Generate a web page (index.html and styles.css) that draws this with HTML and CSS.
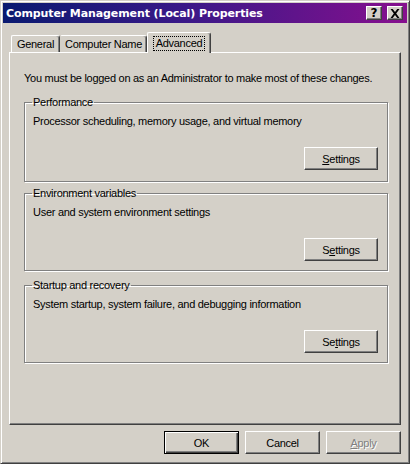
FILE: index.html
```html
<!DOCTYPE html>
<html>
<head>
<meta charset="utf-8">
<link rel="stylesheet" href="styles.css">
</head>
<body>
<div class="window">
  <div class="titlebar">
    <span class="title">Computer Management (Local) Properties</span>
    <div class="caption-btns">
      <span class="cap-btn help">?</span>
      <span class="cap-btn close"><svg width="10" height="9" viewBox="0 0 10 9"><path d="M0.5 0h2.2l2.3 2.9 2.3-2.9h2.2L6.2 4.5 9.5 9H7.3L5 6.1 2.7 9H0.5l3.3-4.5z" fill="#000"/></svg></span>
    </div>
  </div>
  <div class="body">
    <div class="tabs">
      <div class="tab t-general">General</div>
      <div class="tab t-name">Computer Name</div>
      <div class="tab t-adv active"><span class="focus">Advanced</span></div>
    </div>
    <div class="panel">
      <p class="note">You must be logged on as an Administrator to make most of these changes.</p>
      <fieldset class="group g1">
        <legend>Performance</legend>
        <p class="desc">Processor scheduling, memory usage, and virtual memory</p>
        <div class="row"><button class="btn"><u>S</u>ettings</button></div>
      </fieldset>
      <fieldset class="group g2">
        <legend>Environment variables</legend>
        <p class="desc">User and system environment settings</p>
        <div class="row"><button class="btn">S<u>e</u>ttings</button></div>
      </fieldset>
      <fieldset class="group g3">
        <legend>Startup and recovery</legend>
        <p class="desc">System startup, system failure, and debugging information</p>
        <div class="row"><button class="btn">Se<u>t</u>tings</button></div>
      </fieldset>
    </div>
    <div class="actions">
      <button class="btn default">OK</button>
      <button class="btn">Cancel</button>
      <button class="btn disabled"><u>A</u>pply</button>
    </div>
  </div>
</div>
</body>
</html>
```
FILE: styles.css
```css
* { box-sizing: border-box; }
html, body { margin: 0; padding: 0; background: #d4d0c8; }
body {
  font-family: "Liberation Sans", Arial, sans-serif;
  font-size: 11px;
  letter-spacing: -0.28px;
  color: #000;
}
.window {
  width: 410px;
  height: 464px;
  border: 1px solid;
  border-color: #d4d0c8 #404040 #404040 #d4d0c8;
  box-shadow: inset 1px 1px #fff, inset -1px -1px #808080;
  padding: 2px;
  display: flex;
  flex-direction: column;
  background: #d4d0c8;
}
.titlebar {
  height: 20px;
  display: flex;
  align-items: center;
  justify-content: space-between;
  padding: 0 4px 0 3px;
  background: linear-gradient(to right, #0a1a70, #3a1888 45%, #86108e);
}
.title {
  color: #fff;
  font-family: "DejaVu Sans", sans-serif;
  font-weight: bold;
  font-size: 11px;
  letter-spacing: -0.1px;
}
.caption-btns { display: flex; gap: 5px; }
.cap-btn {
  width: 16px;
  height: 14px;
  background: #d4d0c8;
  border: 1px solid;
  border-color: #fff #404040 #404040 #fff;
  box-shadow: inset -1px -1px #808080;
  display: flex;
  align-items: center;
  justify-content: center;
  font-family: "DejaVu Sans", sans-serif;
  font-weight: bold;
  font-size: 12px;
  line-height: 1;
  letter-spacing: 0;
}
.body {
  flex: 1;
  display: flex;
  flex-direction: column;
  padding: 9px 6px 0 6px;
}
.tabs {
  display: flex;
  align-items: flex-end;
  height: 20px;
  padding-left: 2px;
  position: relative;
  z-index: 1;
}
.tab {
  height: 17px;
  border: 1px solid;
  border-bottom: none;
  border-color: #fff #404040 #404040 #fff;
  border-radius: 2px 3px 0 0;
  box-shadow: inset -1px 0 #808080;
  text-align: center;
  line-height: 14px;
  padding-top: 1px;
}
.t-general { width: 49px; }
.t-name { width: 87px; border-left-color: #d4d0c8; }
.t-adv { width: 64px; }
.tab.active {
  height: 21px;
  margin-bottom: -1px;
  background: #d4d0c8;
  padding-top: 3px;
}
.focus {
  display: inline-block;
  outline: 1px dotted #000;
  outline-offset: 0;
  padding: 0 2px;
  line-height: 13px;
}
.panel {
  height: 373px;
  border: 1px solid;
  border-color: #fff #404040 #404040 #fff;
  box-shadow: inset -1px -1px #808080;
  padding: 19px 12px 0 14px;
  display: flex;
  flex-direction: column;
}
.note { margin: 0; line-height: 13px; white-space: nowrap; }
.group {
  margin: 11px 0 0 0;
  padding: 6px 9px 0 8px;
  border: 1px solid #808080;
  box-shadow: inset 1px 1px #fff, 1px 1px #fff;
  min-width: 0;
  height: 86px;
}
.group.g2, .group.g3 { margin-top: 5px; height: 84px; }
.group.g3 { margin-top: 8px; }
.group legend {
  padding: 0 1px;
  margin-left: -1px;
  line-height: 13px;
}
.desc { margin: 0; line-height: 13px; }
.row {
  display: flex;
  justify-content: flex-end;
  margin-top: 19px;
}
.btn {
  font-family: inherit;
  font-size: 11px;
  letter-spacing: inherit;
  color: #000;
  width: 75px;
  height: 23px;
  background: #d4d0c8;
  border: 1px solid;
  border-color: #fff #404040 #404040 #fff;
  box-shadow: inset -1px -1px #808080;
  padding: 0;
  margin: 0;
}
.group .btn { width: 74px; }
.actions {
  display: flex;
  justify-content: flex-end;
  gap: 6px;
  margin-top: 6px;
}
.btn.default {
  border: 1px solid #000;
  box-shadow: inset 1px 1px #fff, inset -1px -1px #404040, inset -2px -2px #808080;
}
.btn.disabled {
  color: #808080;
  text-shadow: 1px 1px #fff;
}
```
